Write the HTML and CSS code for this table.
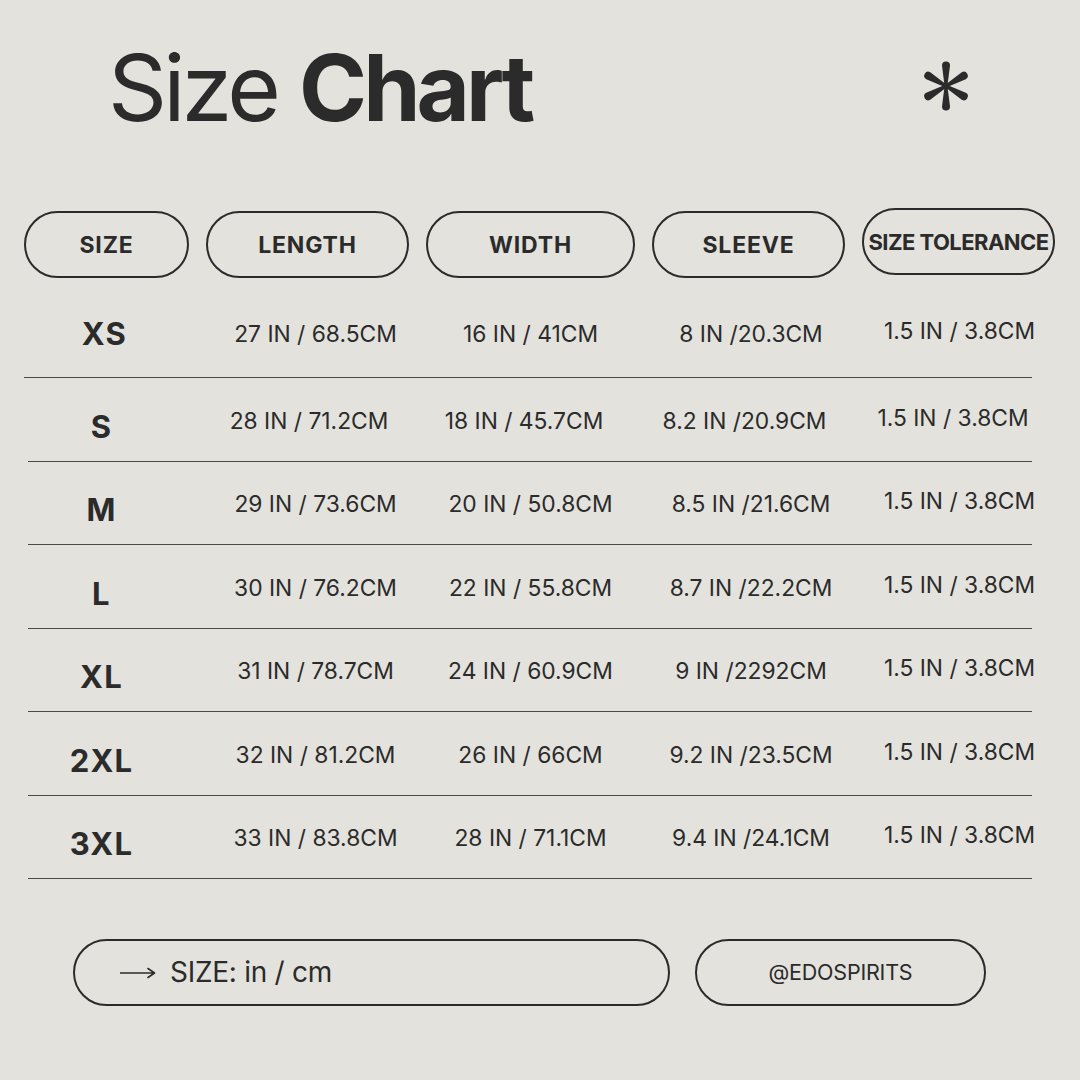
FILE: index.html
```html
<!DOCTYPE html>
<html lang="en">
<head>
<meta charset="utf-8">
<title>Size Chart</title>
<link rel="stylesheet" href="styles.css">
</head>
<body>
<div class="page">
  <header class="top">
    <h1 class="title">Size <strong>Chart</strong></h1>
    <svg class="star" width="54" height="54" viewBox="-27 -27 54 54" aria-hidden="true">
      <g fill="#2b2b2b">
        <path d="M-1.4 0 L-4 -20.5 A4 4 0 0 1 4 -20.5 L1.4 0 Z"/>
        <path d="M-1.4 0 L-4 -20.5 A4 4 0 0 1 4 -20.5 L1.4 0 Z" transform="rotate(60)"/>
        <path d="M-1.4 0 L-4 -20.5 A4 4 0 0 1 4 -20.5 L1.4 0 Z" transform="rotate(120)"/>
        <path d="M-1.4 0 L-4 -20.5 A4 4 0 0 1 4 -20.5 L1.4 0 Z" transform="rotate(180)"/>
        <path d="M-1.4 0 L-4 -20.5 A4 4 0 0 1 4 -20.5 L1.4 0 Z" transform="rotate(240)"/>
        <path d="M-1.4 0 L-4 -20.5 A4 4 0 0 1 4 -20.5 L1.4 0 Z" transform="rotate(300)"/>
        <circle r="2.8"/>
      </g>
    </svg>
  </header>

  <div class="heads">
    <div class="pill">SIZE</div>
    <div class="pill">LENGTH</div>
    <div class="pill">WIDTH</div>
    <div class="pill">SLEEVE</div>
    <div class="pill pill-tol">SIZE TOLERANCE</div>
  </div>

  <div class="table">
    <div class="row">
      <div class="c c-size">XS</div>
      <div class="c c-len">27 IN / 68.5CM</div>
      <div class="c c-wid">16 IN / 41CM</div>
      <div class="c c-sl">8 IN /20.3CM</div>
      <div class="c c-tol">1.5 IN / 3.8CM</div>
    </div>
    <div class="row row-s">
      <div class="c c-size">S</div>
      <div class="c c-len">28 IN / 71.2CM</div>
      <div class="c c-wid">18 IN / 45.7CM</div>
      <div class="c c-sl">8.2 IN /20.9CM</div>
      <div class="c c-tol">1.5 IN / 3.8CM</div>
    </div>
    <div class="row">
      <div class="c c-size">M</div>
      <div class="c c-len">29 IN / 73.6CM</div>
      <div class="c c-wid">20 IN / 50.8CM</div>
      <div class="c c-sl">8.5 IN /21.6CM</div>
      <div class="c c-tol">1.5 IN / 3.8CM</div>
    </div>
    <div class="row">
      <div class="c c-size">L</div>
      <div class="c c-len">30 IN / 76.2CM</div>
      <div class="c c-wid">22 IN / 55.8CM</div>
      <div class="c c-sl">8.7 IN /22.2CM</div>
      <div class="c c-tol">1.5 IN / 3.8CM</div>
    </div>
    <div class="row">
      <div class="c c-size">XL</div>
      <div class="c c-len">31 IN / 78.7CM</div>
      <div class="c c-wid">24 IN / 60.9CM</div>
      <div class="c c-sl">9 IN /2292CM</div>
      <div class="c c-tol">1.5 IN / 3.8CM</div>
    </div>
    <div class="row">
      <div class="c c-size">2XL</div>
      <div class="c c-len">32 IN / 81.2CM</div>
      <div class="c c-wid">26 IN / 66CM</div>
      <div class="c c-sl">9.2 IN /23.5CM</div>
      <div class="c c-tol">1.5 IN / 3.8CM</div>
    </div>
    <div class="row">
      <div class="c c-size">3XL</div>
      <div class="c c-len">33 IN / 83.8CM</div>
      <div class="c c-wid">28 IN / 71.1CM</div>
      <div class="c c-sl">9.4 IN /24.1CM</div>
      <div class="c c-tol">1.5 IN / 3.8CM</div>
    </div>
  </div>

  <footer class="foot">
    <div class="fpill fpill-unit">
      <svg class="arrow" width="36" height="12" viewBox="0 0 36 12" aria-hidden="true">
        <path d="M0 6 H34 M28 1.5 L34.5 6 L28 10.5" fill="none" stroke="#2b2b2b" stroke-width="1.6" stroke-linecap="round" stroke-linejoin="round"/>
      </svg>
      <span>SIZE: in / cm</span>
    </div>
    <div class="fpill fpill-handle">@EDOSPIRITS</div>
  </footer>
</div>
</body>
</html>
```

FILE: styles.css
```css
* { box-sizing: border-box; }

html, body {
  margin: 0;
  padding: 0;
}

body {
  background: #e3e2dd;
  color: #2b2b2b;
  font-family: Inter, "Noto Sans", "Liberation Sans", sans-serif;
}

.page {
  width: 1080px;
  height: 1080px;
  overflow: hidden;
}

.top {
  display: flex;
  align-items: center;
  justify-content: space-between;
  padding: 42px 107px 0 108px;
}

.title {
  margin: 0;
  font-size: 92px;
  line-height: 1;
  font-weight: 400;
  letter-spacing: -0.042em;
}

.title strong {
  font-weight: 700;
}

.star {
  display: block;
  margin-top: -4px;
}

.heads {
  display: grid;
  grid-template-columns: 165px 203px 209px 193px 193px;
  column-gap: 17px;
  align-items: start;
  padding-left: 24px;
  margin-top: 77px;
}

.pill {
  height: 67px;
  border: 2px solid #2b2b2b;
  border-radius: 34px;
  display: flex;
  align-items: center;
  justify-content: center;
  font-weight: 700;
  font-size: 23px;
  letter-spacing: 0.035em;
}

.pill-tol {
  margin-top: -3px;
  font-size: 22px;
  letter-spacing: -0.025em;
  white-space: nowrap;
}

.table {
  margin-top: 17px;
  width: 1008px;
  margin-left: 24px;
}

.row {
  display: grid;
  grid-template-columns: 165px 203px 209px 193px 193px;
  column-gap: 17px;
  align-items: center;
  height: 83.5px;
  background: linear-gradient(#4a4a4a, #4a4a4a) no-repeat 4px 100% / calc(100% - 4px) 1.3px;
}

.row:first-child {
  background-position: 0 100%;
  background-size: 100% 1.3px;
}

.c {
  text-align: center;
  font-size: 22.8px;
  white-space: nowrap;
}

.row .c-size {
  font-weight: 700;
  font-size: 31px;
  letter-spacing: 0.04em;
  padding-top: 12px;
  margin-left: -5px;
  margin-right: 5px;
}

.row:first-child .c { padding-bottom: 6px; }

.row:first-child .c-size {
  padding-top: 0;
  margin-left: -2px;
  margin-right: 2px;
}

.row .c-len { padding-left: 16px; }
.row .c-wid { padding-left: 0; }
.row .c-sl { padding-left: 5px; }
.row .c-tol { padding-bottom: 6px; padding-left: 2px; }
.row:first-child .c-tol { padding-bottom: 12px; }

.row-s .c-len { padding-left: 3px; }
.row-s .c-wid { padding-right: 13px; }
.row-s .c-sl { padding-left: 0; padding-right: 8px; }
.row-s .c-tol { padding-left: 0; padding-right: 11px; }

.foot {
  display: flex;
  gap: 25px;
  padding-left: 73px;
  margin-top: 59px;
}

.fpill {
  height: 67px;
  border: 2px solid #2b2b2b;
  border-radius: 34px;
  display: flex;
  align-items: center;
}

.fpill-unit {
  width: 597px;
  padding-left: 45px;
  gap: 14px;
  font-size: 28px;
  letter-spacing: -0.01em;
}

.arrow {
  display: block;
  margin-top: 2px;
}

.fpill-handle {
  width: 291px;
  justify-content: center;
  font-size: 21.5px;
  letter-spacing: -0.01em;
}
```
